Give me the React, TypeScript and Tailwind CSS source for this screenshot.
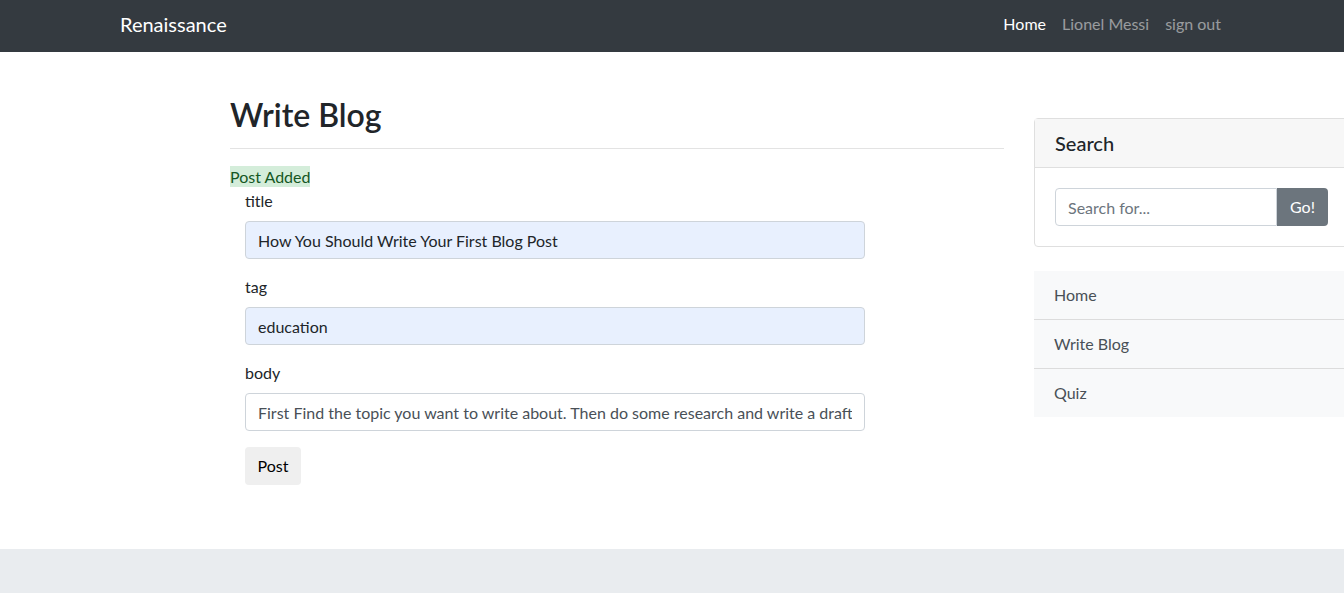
import React from "react";

const font = { fontFamily: 'Lato, "Noto Sans", sans-serif' };

const Navbar = () => (
  <nav className="h-[52px] bg-[#343a40] flex items-center pb-[4px]">
    <div className="w-[1140px] mx-auto pl-[15px] pr-[13px] flex items-center justify-between">
      <a className="text-white text-[20px] leading-[30px] pl-[3px]">Renaissance</a>
      <ul className="flex items-center">
        <li className="px-2 text-white">Home</li>
        <li className="px-2 text-white/50">Lionel Messi</li>
        <li className="px-2 text-white/50">sign out</li>
      </ul>
    </div>
  </nav>
);

const Field = ({ label, value, filled }: { label: string; value: string; filled?: boolean }) => (
  <div className="mb-4">
    <label className="block mb-2 leading-6 text-[#212529]">{label}</label>
    <input
      readOnly
      value={value}
      className={`w-[620px] h-[38px] px-3 rounded border border-[#ced4da] text-[#212529] outline-none ${
        filled ? "bg-[#e8f0fe]" : "bg-white text-[#495057]"
      }`}
    />
  </div>
);

const Sidebar = () => (
  <div className="w-[340px] shrink-0 pt-[66px]">
    <div className="border border-[#dfdfdf] rounded">
      <div className="h-[49px] bg-[#f7f7f7] border-b border-[#dfdfdf] px-5 flex items-center">
        <h5 className="text-[20px] font-medium text-[#212529]">Search</h5>
      </div>
      <div className="p-5 flex">
        <input
          readOnly
          placeholder="Search for..."
          className="w-[222px] h-[38px] px-3 border border-[#ced4da] rounded-l placeholder:text-[#6c757d] outline-none"
        />
        <button className="h-[38px] w-[51px] bg-[#6c757d] text-white rounded-r">Go!</button>
      </div>
    </div>
    <ul className="mt-6 bg-[#f8f9fa] text-[#495057]">
      <li className="h-[49px] px-5 flex items-center border-b border-[#dcdcdc]">Home</li>
      <li className="h-[49px] px-5 flex items-center border-b border-[#dcdcdc]">Write Blog</li>
      <li className="h-[48px] px-5 flex items-center">Quiz</li>
    </ul>
  </div>
);

export default function App() {
  return (
    <div className="w-[1344px] h-[593px] overflow-hidden bg-white text-[16px]" style={font}>
      <Navbar />
      <main className="h-[497px] flex pl-[230px] gap-[30px]">
        <div className="w-[774px] shrink-0">
          <h1 className="mt-[44px] text-[32px] leading-[38px] font-semibold text-[#212529]">Write Blog</h1>
          <hr className="mt-[14px] border-t border-[#e3e3e3]" />
          <div className="mt-[17px] leading-[21px]">
            <span className="bg-[#d4edda] text-[#155724] leading-[21px] inline-block align-top">Post Added</span>
          </div>
          <form className="pl-[15px] mt-[2px]">
            <Field label="title" value="How You Should Write Your First Blog Post" filled />
            <Field label="tag" value="education" filled />
            <Field
              label="body"
              value="First Find the topic you want to write about. Then do some research and write a draft and then edit it"
            />
            <button type="button" className="h-[38px] w-[56px] bg-[#efefef] rounded text-black">
              Post
            </button>
          </form>
        </div>
        <Sidebar />
      </main>
      <footer className="h-[44px] bg-[#e9ecef]" />
    </div>
  );
}
